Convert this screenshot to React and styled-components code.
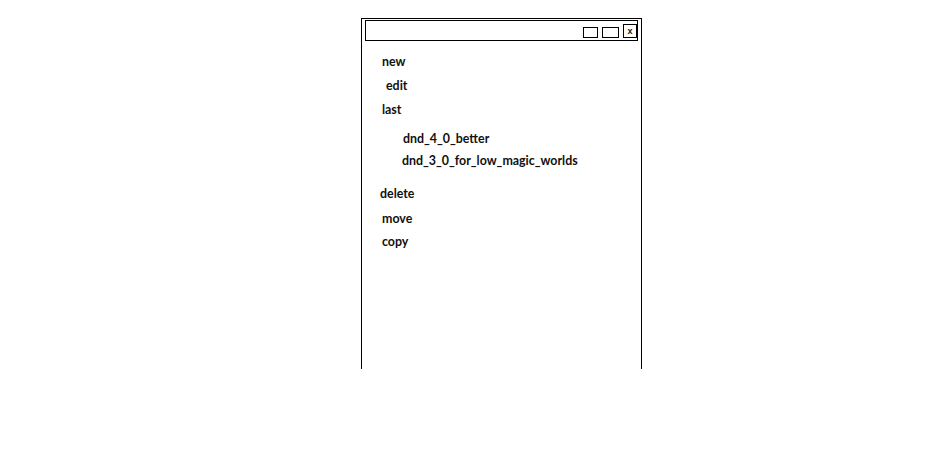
import React from "react";
import styled, { createGlobalStyle } from "styled-components";

const GlobalStyle = createGlobalStyle`
  html, body {
    margin: 0;
    padding: 0;
    background: #fff;
  }
  body {
    font-family: Lato, "Open Sans", sans-serif;
    color: #111;
  }
`;

const Page = styled.div`
  width: 948px;
  height: 475px;
  padding-top: 18px;
  box-sizing: border-box;
`;

const Window = styled.div`
  margin-left: 361px;
  width: 281px;
  height: 351px;
  box-sizing: border-box;
  border: 1px solid #000;
  border-bottom: none;
  padding: 1px 3px 0 3px;
  display: flex;
  flex-direction: column;
`;

const TitleBar = styled.div`
  height: 21px;
  box-sizing: border-box;
  border: 1px solid #000;
  display: flex;
  align-items: flex-end;
  justify-content: flex-end;
  padding: 0 0 2px 0;
  gap: 4px;
`;

const Control = styled.div`
  width: ${(p) => p.$w}px;
  height: ${(p) => p.$h}px;
  box-sizing: border-box;
  border: 1px solid #000;
  font-family: "Liberation Sans", Arial, sans-serif;
  font-size: 9px;
  font-weight: bold;
  line-height: ${(p) => p.$h - 2}px;
  text-align: center;
`;

const Menu = styled.div`
  display: flex;
  flex-direction: column;
  align-items: flex-start;
`;

const Item = styled.div`
  margin-top: ${(p) => p.$top}px;
  margin-left: ${(p) => p.$left}px;
  font-size: 12.4px;
  font-weight: 700;
  line-height: 16px;
  white-space: nowrap;
`;

const items = [
  { label: "new", top: 13, left: 17 },
  { label: "edit", top: 8, left: 21 },
  { label: "last", top: 8, left: 17 },
  { label: "dnd_4_0_better", top: 13, left: 38 },
  { label: "dnd_3_0_for_low_magic_worlds", top: 6, left: 37 },
  { label: "delete", top: 17, left: 15 },
  { label: "move", top: 9, left: 17 },
  { label: "copy", top: 7, left: 17 },
];

export default function App() {
  return (
    <Page>
      <GlobalStyle />
      <Window>
        <TitleBar>
          <Control $w={15} $h={11} />
          <Control $w={17} $h={11} />
          <Control $w={14} $h={14}>x</Control>
        </TitleBar>
        <Menu>
          {items.map((it) => (
            <Item key={it.label} $top={it.top} $left={it.left}>
              {it.label}
            </Item>
          ))}
        </Menu>
      </Window>
    </Page>
  );
}
